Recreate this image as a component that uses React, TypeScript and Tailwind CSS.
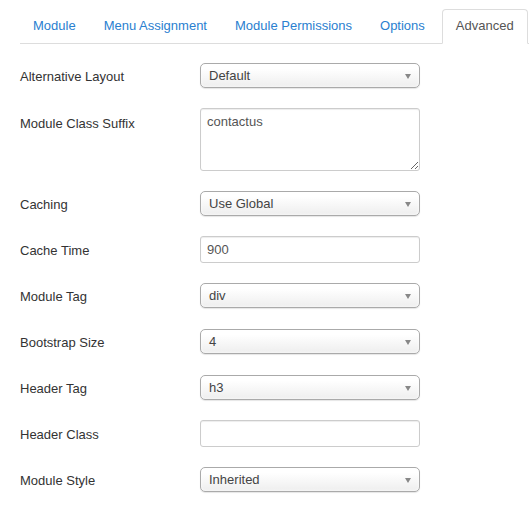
import React from 'react';

const tabs = ['Module', 'Menu Assignment', 'Module Permissions', 'Options', 'Advanced'];

const SelectBox = ({ value }: { value: string }) => (
  <div className="relative h-[25px] w-[220px] rounded-[5px] border border-[#aaa] bg-gradient-to-b from-white from-20% to-[#eeeeee] pl-[8px] text-[13px] leading-[23px] text-[#444] shadow-[0_0_3px_#fff_inset,0_1px_1px_rgba(0,0,0,0.1)]">
    {value}
    <span className="absolute right-[8px] top-[10px] h-0 w-0 border-x-[3.5px] border-t-[5px] border-x-transparent border-t-[#888]" />
  </div>
);

const TextInput = ({ value }: { value: string }) => (
  <input
    readOnly
    value={value}
    className="h-[27px] w-[220px] rounded-[3px] border border-[#ccc] bg-white px-[6px] text-[13px] text-[#555] shadow-[inset_0_1px_1px_rgba(0,0,0,0.075)] outline-none"
  />
);

type Row = { label: string; kind: 'select' | 'input' | 'textarea'; value: string };

const rows: Row[] = [
  { label: 'Alternative Layout', kind: 'select', value: 'Default' },
  { label: 'Module Class Suffix', kind: 'textarea', value: 'contactus' },
  { label: 'Caching', kind: 'select', value: 'Use Global' },
  { label: 'Cache Time', kind: 'input', value: '900' },
  { label: 'Module Tag', kind: 'select', value: 'div' },
  { label: 'Bootstrap Size', kind: 'select', value: '4' },
  { label: 'Header Tag', kind: 'select', value: 'h3' },
  { label: 'Header Class', kind: 'input', value: '' },
  { label: 'Module Style', kind: 'select', value: 'Inherited' },
];

export default function App() {
  return (
    <div className="min-h-[516px] w-[529px] overflow-hidden bg-white pt-[9px] text-[13px] text-[#333]" style={{ fontFamily: '"Liberation Sans", Arial, sans-serif' }}>
      <ul className="ml-[20px] flex flex-nowrap border-b border-[#ddd]">
        {tabs.map((t) => {
          const active = t === 'Advanced';
          return (
            <li
              key={t}
              className={
                active
                  ? '-mb-px ml-[2px] mr-[2px] shrink-0 whitespace-nowrap rounded-t-[4px] border border-[#ddd] border-b-white bg-white px-[13px] pb-[8px] pt-[7px] leading-[18px] text-[#555]'
                  : 'mr-[2px] shrink-0 whitespace-nowrap border border-transparent px-[12px] pb-[7px] pt-[7px] leading-[18px] text-[#2a80d0]'
              }
            >
              {t}
            </li>
          );
        })}
      </ul>

      <div className="ml-[20px] pt-[17px]">
        {rows.map((r) =>
          r.kind === 'textarea' ? (
            <div key={r.label} className="mb-[18px] flex h-[64px] items-start">
              <label className="w-[180px] pt-[8px] leading-[18px]">{r.label}</label>
              <textarea
                readOnly
                value={r.value}
                className="mt-[1px] h-[63px] w-[220px] rounded-[3px] border border-[#ccc] bg-white px-[6px] py-[4px] text-[13px] leading-[18px] text-[#555] shadow-[inset_0_1px_1px_rgba(0,0,0,0.075)] outline-none"
              />
            </div>
          ) : (
            <div key={r.label} className="mb-[18px] flex h-[28px] items-center">
              <label className="w-[180px] pt-[4px] leading-[18px]">{r.label}</label>
              {r.kind === 'select' ? <SelectBox value={r.value} /> : <TextInput value={r.value} />}
            </div>
          )
        )}
      </div>
    </div>
  );
}
